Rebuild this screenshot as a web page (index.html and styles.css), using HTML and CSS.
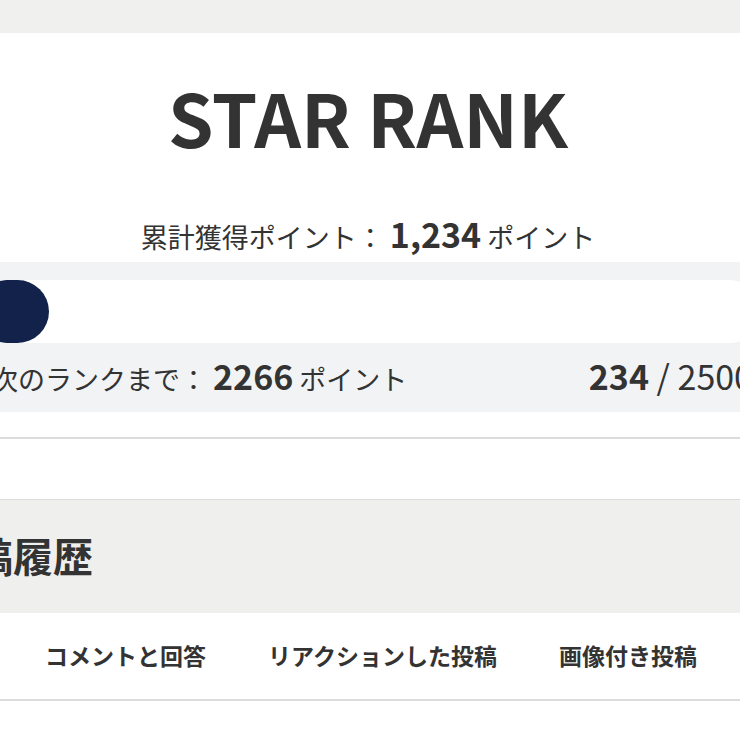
FILE: index.html
```html
<!DOCTYPE html>
<html lang="ja">

<head>
  <meta charset="UTF-8" />
  <meta name="viewport" content="width=device-width, initial-scale=1.0" />
  <title>STAR RANK</title>
  <link rel="stylesheet" href="styles.css">
</head>

<body>
  <!-- Top bar -->
  <div class="topbar"></div>

  <div class="page">

    <!-- Rank card -->
    <section class="rank">
      <h1 class="rank-title">STAR RANK</h1>
      <p class="rank-total">累計獲得ポイント： <strong>1,234</strong> ポイント</p>

      <div class="rank-progress">
        <div class="progress-track">
          <div class="progress-fill" style="width: 9.36%;"></div>
        </div>
        <div class="rank-next">
          <span>次のランクまで： <strong>2266</strong> ポイント</span>
          <span class="rank-count"><strong>234</strong> / 2500</span>
        </div>
      </div>
    </section>

    <!-- Post history -->
    <section class="history">
      <h2 class="history-title">投稿履歴</h2>
      <nav class="tabs">
        <span class="tab">コメントと回答</span>
        <span class="tab">リアクションした投稿</span>
        <span class="tab">画像付き投稿</span>
      </nav>
    </section>

  </div>
</body>

</html>
```

FILE: styles.css
```css
* {
  box-sizing: border-box;
  margin: 0;
  padding: 0;
}

html,
body {
  font-family: 'Noto Sans CJK JP', 'Noto Sans', sans-serif;
  background-color: #fff;
  color: #333;
}

body {
  overflow: hidden;
}

.topbar {
  height: 33px;
  background-color: #f0f0ef;
}

.page {
  width: 916px;
  margin-left: -90px;
}

.rank {
  margin: 0 47px;
  padding-top: 47px;
  padding-bottom: 25px;
  border-bottom: 2px solid #dcdcdc;
}

.rank-title {
  font-size: 73px;
  font-weight: bold;
  line-height: 1;
  text-align: center;
}

.rank-total {
  margin-top: 64px;
  font-size: 27px;
  line-height: 1;
  text-align: center;
}

.rank-total strong,
.rank-next strong {
  font-size: 34px;
  font-weight: bold;
  line-height: 1;
}

.rank-progress {
  margin-top: 11px;
  background-color: #f2f3f5;
  padding: 18px 18px 19px;
  display: flex;
  flex-direction: column;
  gap: 16px;
}

.progress-track {
  height: 63px;
  background-color: #fff;
  border-radius: 32px;
  overflow: hidden;
}

.progress-fill {
  height: 100%;
  background-color: #13224a;
  border-radius: 32px;
}

.rank-next {
  display: flex;
  justify-content: space-between;
  align-items: baseline;
  padding: 0 8px 0 16px;
  font-size: 27px;
  line-height: 1;
}

.rank-count {
  font-size: 34px;
}

.history {
  margin-top: 60px;
  border-top: 1px solid #dcdcdc;
}

.history-title {
  background-color: #efefee;
  font-size: 40px;
  font-weight: bold;
  line-height: 1;
  padding: 35px 23px 38px;
}

.tabs {
  display: flex;
  justify-content: center;
  gap: 62px;
  padding: 31px 0 32px 6px;
  border-bottom: 2px solid #dcdcdc;
}

.tab {
  font-size: 23px;
  font-weight: bold;
  line-height: 1;
  cursor: pointer;
}
```
